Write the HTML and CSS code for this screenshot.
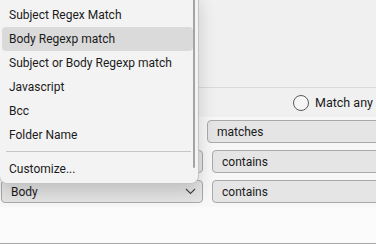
FILE: index.html
```html
<!DOCTYPE html>
<html lang="en">
<head>
    <meta charset="UTF-8">
    <title>Filter rules</title>
    <link rel="stylesheet" href="styles.css">
</head>
<body>
    <div class="window">
        <div class="top-pane"></div>

        <div class="match-row">
            <span class="radio"></span>
            <span class="match-label">Match any of the following</span>
        </div>

        <div class="rules">
            <div class="rule rule-first">
                <div class="select select-left"></div>
                <div class="select select-right"><span>matches</span></div>
            </div>
            <div class="rule">
                <div class="select select-left"></div>
                <div class="select select-right"><span>contains</span></div>
            </div>
            <div class="rule">
                <div class="select select-left">
                    <span>Body</span>
                    <svg class="chevron" width="11" height="7" viewBox="0 0 11 7">
                        <path d="M1 1 L5.5 5.5 L10 1" fill="none" stroke="#444" stroke-width="1.1"/>
                    </svg>
                </div>
                <div class="select select-right"><span>contains</span></div>
            </div>
        </div>

        <div class="blank"></div>
        <div class="footer"></div>

        <!-- dropdown list opened over the rules -->
        <div class="menu">
            <div class="menu-item">Subject Regex Match</div>
            <div class="menu-item active">Body Regexp match</div>
            <div class="menu-item">Subject or Body Regexp match</div>
            <div class="menu-item">Javascript</div>
            <div class="menu-item">Bcc</div>
            <div class="menu-item">Folder Name</div>
            <div class="menu-sep"></div>
            <div class="menu-item">Customize...</div>
            <div class="menu-scroll"></div>
        </div>
    </div>
</body>
</html>
```

FILE: styles.css
```css
* {
    margin: 0;
    padding: 0;
    box-sizing: border-box;
}

body {
    font-family: Roboto, "Noto Sans", sans-serif;
    font-size: 12px;
    color: #1b1b1b;
    background: #ffffff;
    overflow: hidden;
}

.window {
    position: relative;
    width: 376px;
    height: 247px;
    overflow: hidden;
    background: #f0f0f0;
}

.top-pane {
    height: 88px;
    background: #f0f0f0;
    border-bottom: 1px solid #dadada;
}

.match-row {
    height: 29px;
    display: flex;
    align-items: center;
    padding-left: 293px;
    white-space: nowrap;
    overflow: hidden;
    background: #f0f0f0;
}

.radio {
    flex: none;
    width: 16px;
    height: 16px;
    border: 1px solid #5a5a5a;
    border-radius: 50%;
    background: #f6f6f6;
    margin-right: 6px;
}

.match-label {
    font-size: 12.5px;
}

.rules {
    height: 90px;
    padding: 3px 0 4px 1px;
    display: flex;
    flex-direction: column;
    gap: 7px;
    background: #f7f7f7;
}

.rule {
    display: flex;
    gap: 9px;
    height: 23px;
}

.select {
    display: flex;
    align-items: center;
    height: 23px;
    padding: 0 9px;
    background: #e5e5e5;
    border: 1px solid #a9a9a9;
    border-radius: 4px;
    white-space: nowrap;
}

.select-left {
    flex: none;
    width: 202px;
    justify-content: space-between;
}

.select-right {
    flex: none;
    width: 200px;
}

.rule-first .select-left {
    width: 197px;
}

.chevron {
    margin-right: -3px;
}

.blank {
    height: 36px;
    background: #fbfbfb;
}

.footer {
    height: 4px;
    border-top: 1px solid #a8a8a8;
    background: #ffffff;
}

.menu {
    position: absolute;
    left: -1px;
    top: -8px;
    width: 200px;
    padding: 10px 5px 2px 2px;
    background: #f3f3f3;
    border: 1px solid #c4c4c4;
    border-radius: 8px;
    box-shadow: 0 8px 18px rgba(0, 0, 0, 0.16);
}

.menu-item {
    height: 24px;
    line-height: 24px;
    padding-left: 7px;
    border-radius: 4px;
    white-space: nowrap;
}

.menu-item.active {
    background: #dadada;
}

.menu-sep {
    height: 1px;
    margin: 4px 2px 5px 4px;
    background: #c6c6c6;
}

.menu-scroll {
    position: absolute;
    right: 3px;
    top: 0;
    width: 2px;
    height: 175px;
    border-radius: 1px;
    background: #a4a4a4;
}
```
